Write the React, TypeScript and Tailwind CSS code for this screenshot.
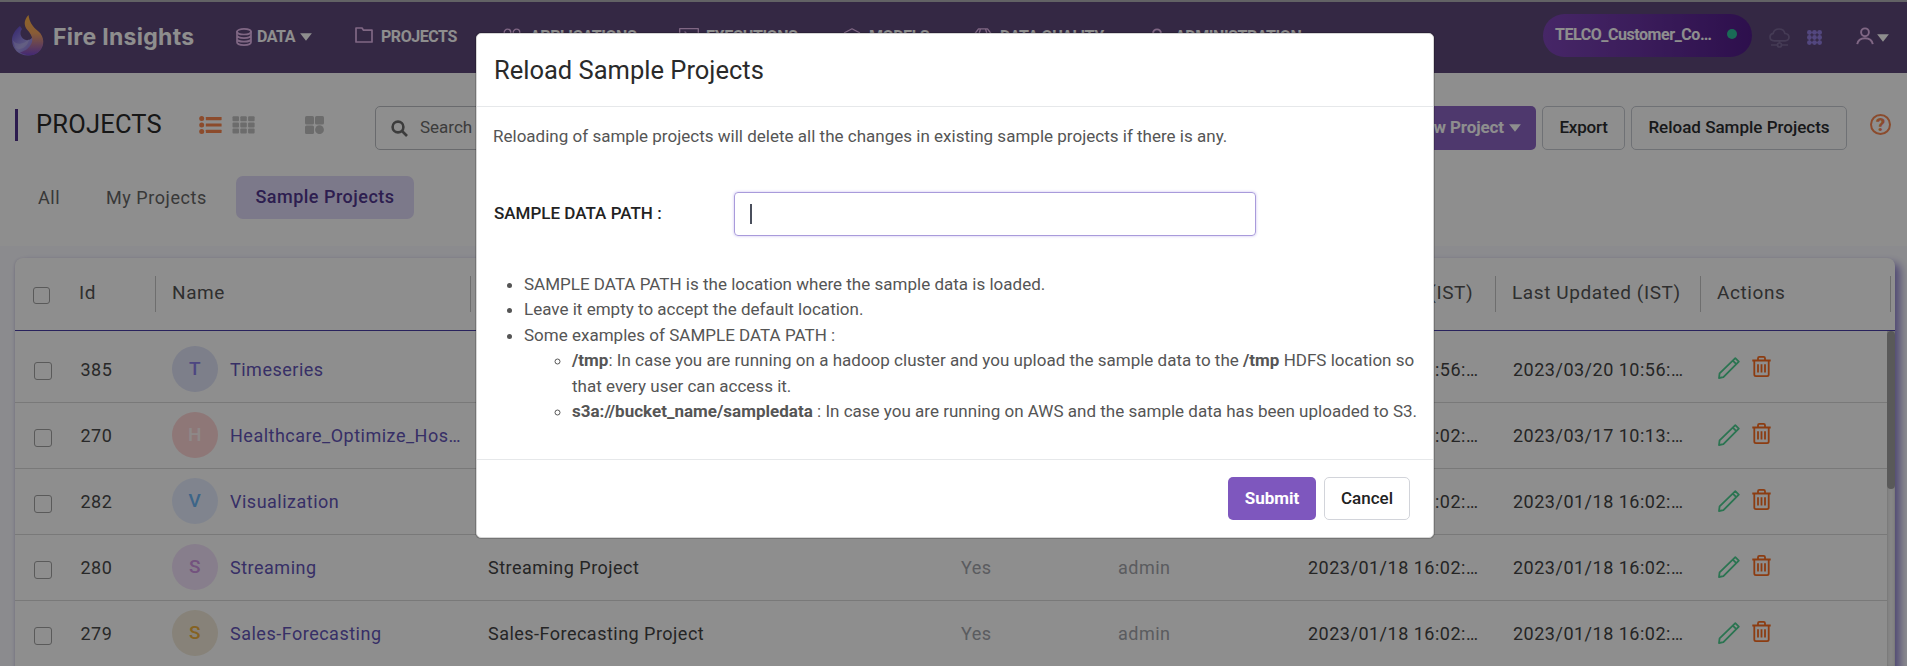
import React from "react";

type Row = {
  id: string;
  name: string;
  description: string;
  created: string;
  updated: string;
  letter: string;
  tone: string;
};

const rows: Row[] = [
  { id: "385", name: "Timeseries", description: "", created: "2023/03/20 10:56:…", updated: "2023/03/20 10:56:…", letter: "T", tone: "bg-[#e0e4f8] text-[#8a7fe8]" },
  { id: "270", name: "Healthcare_Optimize_Hos…", description: "", created: "2023/01/18 16:02:…", updated: "2023/03/17 10:13:…", letter: "H", tone: "bg-[#ffd6d6] text-[#fff5f5]" },
  { id: "282", name: "Visualization", description: "", created: "2023/01/18 16:02:…", updated: "2023/01/18 16:02:…", letter: "V", tone: "bg-[#e6eeff] text-[#6db5f5]" },
  { id: "280", name: "Streaming", description: "Streaming Project", created: "2023/01/18 16:02:…", updated: "2023/01/18 16:02:…", letter: "S", tone: "bg-[#f3e2fb] text-[#cf93e2]" },
  { id: "279", name: "Sales-Forecasting", description: "Sales-Forecasting Project", created: "2023/01/18 16:02:…", updated: "2023/01/18 16:02:…", letter: "S", tone: "bg-[#f2ead9] text-[#efb13d]" },
];

function Logo() {
  return (
    <svg width="32" height="41" viewBox="0 0 32 41" className="shrink-0">
      <defs>
        <linearGradient id="flame" x1="0" y1="0" x2="0" y2="1">
          <stop offset="0" stopColor="#ffb545" />
          <stop offset="0.45" stopColor="#f5a562" />
          <stop offset="1" stopColor="#7a4ad0" />
        </linearGradient>
        <linearGradient id="drop" x1="0" y1="0" x2="1" y2="1">
          <stop offset="0" stopColor="#5a3fc8" />
          <stop offset="0.5" stopColor="#a59be8" />
          <stop offset="1" stopColor="#6a45d8" />
        </linearGradient>
      </defs>
      <path d="M8 11 C3 15 0 20 0 25 C0 34 7 40.500 16 40.500 C24 40.500 29 36 31 29 L21 20 C20 25 16 26 12.500 24.500 C8 22 7.500 17 10 14 Z" fill="url(#drop)" />
      <path d="M16.500 0 C12 5 11.500 10 15 14.500 C20 20 22.500 25 18 31 C15 35 12 36 8 37.500 C15 42 24 41 28.500 35 C33 29 32 21 26 16 C20 11 17.500 7 16.500 0 Z" fill="url(#flame)" />
      <path d="M0.500 25 C4 30 12 30 17 24 C16 32 9 36 3.500 33 Z" fill="#cfc8f2" opacity="0.35" />
    </svg>
  );
}

const stroke = { fill: "none", stroke: "#e6b9ee", strokeWidth: 1.7, strokeLinejoin: "round" as const, strokeLinecap: "round" as const };

function DatabaseIcon() {
  return (
    <svg width="16" height="18" viewBox="0 0 16 18" {...stroke}>
      <ellipse cx="8" cy="3.700" rx="7" ry="2.800" />
      <path d="M1 3.700v10.600c0 1.550 3.100 2.800 7 2.800s7-1.250 7-2.800V3.700M1 7.300c0 1.550 3.100 2.800 7 2.800s7-1.250 7-2.800M1 10.900c0 1.550 3.100 2.800 7 2.800s7-1.250 7-2.800" />
    </svg>
  );
}
function FolderIcon() {
  return (
    <svg width="18" height="16" viewBox="0 0 18 16" {...stroke}>
      <path d="M1 15V1h6l1.500 2.200H17V15z" />
    </svg>
  );
}
function AppsIcon() {
  return (
    <svg width="18" height="18" viewBox="0 0 18 18" {...stroke} strokeWidth={1.3}>
      <circle cx="4.500" cy="4.500" r="3.300" />
      <circle cx="13.500" cy="4.500" r="3.300" />
      <circle cx="4.500" cy="13.500" r="3.300" />
      <circle cx="13.500" cy="13.500" r="3.300" />
    </svg>
  );
}
function TerminalIcon() {
  return (
    <svg width="20" height="18" viewBox="0 0 20 18" {...stroke} strokeWidth={1.3}>
      <path d="M.7.700h18.600v16.600H.7zM6 4l4 4-4 4" />
    </svg>
  );
}
function CubeIcon() {
  return (
    <svg width="18" height="18" viewBox="0 0 18 18" {...stroke} strokeWidth={1.3}>
      <path d="M9 .800l7.500 4v8.400L9 17.200l-7.500-4V4.800zM1.500 4.800L9 9l7.500-4.200M9 9v8" />
    </svg>
  );
}
function GemIcon() {
  return (
    <svg width="18" height="18" viewBox="0 0 18 18" {...stroke} strokeWidth={1.3}>
      <path d="M4.500.800h9L17.300 6 9 17 .700 6zM6.500.800L5 6l4 11 4-11-1.500-5.200M.7 6h16.600" />
    </svg>
  );
}
function UserIcon() {
  return (
    <svg width="18" height="18" viewBox="0 0 18 18" {...stroke} strokeWidth={1.9} strokeLinecap="butt">
      <circle cx="9" cy="5.300" r="3.900" />
      <path d="M1.200 17.200c.7-4 3.600-6 7.800-6s7.100 2 7.800 6" />
    </svg>
  );
}
function Caret({ className = "" }: { className?: string }) {
  return (
    <svg width="12" height="8" viewBox="0 0 12 8" className={className}>
      <path d="M.100.300h11.800L6 7.800z" fill="#fff" />
    </svg>
  );
}
function ListIcon() {
  return (
    <svg width="23" height="18" viewBox="0 0 23 18" fill="#fb8850">
      {[2.6, 9, 15.4].map((y) => (
        <g key={y}>
          <circle cx="2.700" cy={y} r="2.500" />
          <rect x="6.800" y={y - 1.6} width="15.800" height="3.200" rx=".4" />
        </g>
      ))}
    </svg>
  );
}
function GridIcon() {
  return (
    <svg width="23" height="18" viewBox="0 0 23 18" fill="#c2c2c2">
      {[0, 6.2, 12.4].map((y) => [0.5, 8.3, 16.1].map((x) => <rect key={x + "-" + y} x={x} y={y + 0.2} width="6.500" height="5" rx="1" />))}
    </svg>
  );
}
function WidgetsIcon() {
  return (
    <svg width="19" height="18" viewBox="0 0 19 18" fill="#c2c2c2">
      <rect width="9" height="8.500" rx="1.500" />
      <rect x="10" width="9" height="8.500" rx="1.500" />
      <rect y="9.500" width="9" height="8.500" rx="1.500" />
      <circle cx="14.500" cy="13.700" r="4.400" />
    </svg>
  );
}
function CloudIcon() {
  return (
    <svg width="21" height="20" viewBox="0 0 21 20" fill="none" stroke="#7c6b99" strokeWidth="1.700">
      <path d="M5.500 12.800C2.800 12.800 1 11.300 1 9c0-2 1.400-3.300 3.200-3.600C4.800 2.600 7.200 1 10 1c3 0 5.400 1.800 5.900 4.500C18.300 5.700 20 7.200 20 9.300c0 2.200-1.700 3.500-4 3.500zM10.500 12.800v2.200M2 17h6M13 17h6" />
      <circle cx="10.500" cy="17" r="2" />
    </svg>
  );
}
function DotsIcon() {
  return (
    <svg width="15" height="15" viewBox="0 0 15 15" fill="#9580e4">
      {[2.4, 7.5, 12.6].map((y) => [2.4, 7.5, 12.6].map((x) => <circle key={x + "-" + y} cx={x} cy={y} r="2.400" />))}
      <path d="M2.400 2.400h10.200v10.200H2.400z" fill="none" stroke="#9580e4" strokeWidth=".8" />
    </svg>
  );
}
function PencilIcon() {
  return (
    <svg width="22" height="22" viewBox="0 0 22 22" fill="none" stroke="#4dd192" strokeWidth="1.800" strokeLinejoin="round">
      <path d="M1 21l.6-4.600L17.300 1.200l3.500 3.400L5.400 20.200zM14.800 3.700l3.500 3.500" />
    </svg>
  );
}
function TrashIcon() {
  return (
    <svg width="19" height="21" viewBox="0 0 19 21" fill="none" stroke="#fb6d20" strokeWidth="1.800">
      <path d="M.3 4.500h18.400M2.300 4.500v14c0 1 .6 1.600 1.600 1.600h11.200c1 0 1.600-.6 1.600-1.600v-14M6 4.500V2.300c0-.9.500-1.400 1.400-1.400h4.200c.9 0 1.400.5 1.400 1.400v2.200M6 8.200v8.400M9.500 8.200v8.400M13 8.200v8.400" />
    </svg>
  );
}
function Checkbox({ className }: { className: string }) {
  return <span className={"block shrink-0 rounded-[3px] border border-[#a2a2a2] " + className} />;
}

function NavItem({ icon, label, gap, width, caret }: { icon: React.ReactNode; label: string; gap: string; width: string; caret?: boolean }) {
  return (
    <div className={"flex shrink-0 items-center " + width}>
      <span className={"flex shrink-0 " + gap}>{icon}</span>
      <span className="whitespace-nowrap text-[16px] font-bold tracking-[-0.450px] text-white">{label}</span>
      {caret && <Caret className="ml-[5px]" />}
    </div>
  );
}

function TopBar() {
  return (
    <header className="flex h-[73px] items-center border-t-2 border-[#b0b0b6] bg-[#5e487b] pl-[12px]">
      <div className="flex w-[224px] shrink-0 items-center gap-[9px] pb-[4px]">
        <Logo />
        <span className="whitespace-nowrap pt-[3px] font-['Inter'] text-[23px] font-bold tracking-[0.300px] text-white">Fire Insights</span>
      </div>
      <nav className="flex pb-px">
        <NavItem icon={<DatabaseIcon />} label="DATA" gap="w-[21px]" width="w-[119px]" caret />
        <NavItem icon={<FolderIcon />} label="PROJECTS" gap="w-[26px] pb-[4px]" width="w-[148px]" />
        <NavItem icon={<AppsIcon />} label="APPLICATIONS" gap="w-[27px]" width="w-[176px]" />
        <NavItem icon={<TerminalIcon />} label="EXECUTIONS" gap="w-[27px]" width="w-[164px]" />
        <NavItem icon={<CubeIcon />} label="MODELS" gap="w-[26px]" width="w-[131px]" />
        <NavItem icon={<GemIcon />} label="DATA QUALITY" gap="w-[26px]" width="w-[174px]" />
        <NavItem icon={<UserIcon />} label="ADMINISTRATION" gap="w-[27px]" width="w-[170px]" />
      </nav>
      <div className="ml-auto flex items-center pr-[18px]">
        <div className="mb-[4px] flex h-[43px] w-[209px] items-center rounded-full bg-linear-to-r from-[#7f46b9] to-[#521c8a] pl-[12px]">
          <span className="w-[172px] whitespace-nowrap pb-px text-[16px] font-bold tracking-[-0.450px] text-white">TELCO_Customer_Co…</span>
          <span className="mb-[4px] size-[10px] rounded-full bg-[#2fc09a]" />
        </div>
        <span className="ml-[17px]"><CloudIcon /></span>
        <span className="ml-[17px]"><DotsIcon /></span>
        <span className="ml-[34px] mb-[3px]"><UserIcon /></span>
        <Caret className="ml-[3px]" />
      </div>
    </header>
  );
}

const button = "flex h-[44px] shrink-0 items-center justify-center whitespace-nowrap rounded-[5px] border border-[#c8cbd2] text-[17px] font-medium text-[#2b2d30]";

function Toolbar() {
  return (
    <section className="h-[173px] bg-white">
      <div className="flex h-[77px] items-end pl-[15px]">
        <div className="mb-[9px] h-[32px] w-[3px] bg-[#50328c]" />
        <h1 className="mb-[7px] ml-[18px] w-[163px] text-[25.500px] leading-[38px] tracking-[0.200px] text-[#2a2a2a]">PROJECTS</h1>
        <div className="mb-[16px] flex w-[176px] items-end">
          <ListIcon />
          <span className="ml-[10px]"><GridIcon /></span>
          <span className="ml-[50px]"><WidgetsIcon /></span>
        </div>
        <div className="flex h-[44px] w-[300px] items-center rounded-[5px] border border-[#bdbfc4] pl-[15px]">
          <svg width="17" height="17" viewBox="0 0 17 17" fill="none" stroke="#6c6c6c" strokeWidth="2.600">
            <circle cx="7" cy="7" r="5.400" />
            <path d="M11 11l5 5" />
          </svg>
          <span className="ml-[12px] pb-px text-[17px] text-[#6c6c6c]">Search</span>
        </div>
        <div className="ml-auto flex items-end pr-[15px]">
          <div className="flex h-[44px] w-[144px] items-center justify-end rounded-[5px] bg-[#8c66c4] pr-[15px] text-[17px] font-bold tracking-[-0.100px] text-white">
            New Project
            <Caret className="ml-[5px]" />
          </div>
          <div className={button + " ml-[6px] w-[83px] tracking-[-0.200px]"}>Export</div>
          <div className={button + " ml-[6px] w-[216px]"}>Reload Sample Projects</div>
          <div className="mb-[15px] ml-[23px] mr-px flex size-[21px] items-center justify-center rounded-full border-2 border-[#f98851] text-[18px] font-black leading-none text-[#f98851]">?</div>
        </div>
      </div>
      <div className="mt-[26px] flex h-[43px] items-center text-[18px] tracking-[0.550px] text-[#666]">
        <span className="w-[68px] pl-[38px]">All</span>
        <span className="ml-[38px] w-[130px]">My Projects</span>
        <span className="flex h-[43px] w-[178px] items-center justify-center rounded-[7px] bg-[#dfd9f8] pb-[2px] font-medium tracking-[0.500px] text-[#51378f]">Sample Projects</span>
      </div>
    </section>
  );
}

function HeaderCell({ label, width }: { label?: string; width: string }) {
  return (
    <div className={"flex h-[36px] shrink-0 items-center whitespace-nowrap border-r border-[#c6c6c6] pl-[16px] pb-px text-[19px] tracking-[0.600px] text-[#555] " + width}>
      {label}
    </div>
  );
}

function ProjectTable() {
  return (
    <section className="h-[420px] bg-[#fafaff] pl-[15px] pr-[12px] pt-[12px]">
      <div className="h-[420px] rounded-t-[8px] bg-white shadow-[5px_5px_9px_#8f83d0,-1px_0_2px_#e6e4f0]">
        <div className="flex h-[73px] items-center border-b border-[#4b3fa8]">
          <Checkbox className="ml-[18px] mt-[3px] size-[17px]" />
          <div className="flex h-[36px] w-[106px] items-center border-r border-[#c6c6c6] pb-px pl-[29px] text-[19px] tracking-[0.500px] text-[#555]">Id</div>
          <HeaderCell label="Name" width="w-[315px]" />
          <HeaderCell width="w-[440px]" />
          <HeaderCell width="w-[190px]" />
          <HeaderCell width="w-[190px]" />
          <HeaderCell label="Date Created (IST)" width="w-[205px]" />
          <HeaderCell label="Last Updated (IST)" width="w-[205px]" />
          <HeaderCell label="Actions" width="w-[190px]" />
        </div>
        <div className="flex">
          <div className="w-[1872px] pt-[6px]">
            {rows.map((r, i) => {
              const lift = i === 0 ? "pb-[2px]" : "";
              return (
                <div key={r.id} className="flex h-[66px] items-center whitespace-nowrap border-b border-[#dadada] text-[18px] tracking-[0.500px]">
                  <span className={"ml-[19px] mt-[5px] shrink-0 " + lift}><Checkbox className="size-[18px]" /></span>
                  <span className="w-[120px] pl-[28.500px] text-[#4a4a4a]">{r.id}</span>
                  <span className={"mb-px flex size-[46px] shrink-0 items-center justify-center rounded-full text-[19px] font-medium " + r.tone}>{r.letter}</span>
                  <span className="w-[270px] shrink-0 pl-[12px] text-[#6455b8]">{r.name}</span>
                  <span className="w-[473px] shrink-0 tracking-[0.480px] text-[#444]">{r.description}</span>
                  <span className="w-[157px] shrink-0 text-[#a3a5ab]">Yes</span>
                  <span className="w-[190px] shrink-0 text-[#a3a5ab]">admin</span>
                  <span className="w-[205px] shrink-0 text-[#444]">{r.created}</span>
                  <span className="w-[205px] shrink-0 text-[#444]">{r.updated}</span>
                  <span className={"mb-[2px] shrink-0 " + lift}><PencilIcon /></span>
                  <span className={"mb-[5px] ml-[12px] shrink-0 " + lift}><TrashIcon /></span>
                </div>
              );
            })}
          </div>
          <div className="w-[8px] bg-[#f0f0f0] shadow-[inset_0_0_3px_#bbb]">
            <div className="h-[158px] rounded-full bg-[#a0a0a0]" />
          </div>
        </div>
      </div>
    </section>
  );
}

function ReloadDialog() {
  return (
    <div className="mt-[33px] h-[505px] w-[958px] overflow-hidden rounded-[5px] border border-[#d6d6d6] bg-white shadow-[0_0_0_1px_rgba(0,0,0,0.18)]">
      <div className="h-[73px] border-b border-[#e6e8ea] pl-[17px] pt-[16px] text-[25.500px] leading-[40px] text-[#2a2a2a]">Reload Sample Projects</div>
      <div className="h-[353px] border-b border-[#e6e8ea] pl-[16px] pt-[16px] text-[17px] leading-[25.500px] tracking-[0.010px] text-[#555]">
        <p className="pt-[1px]">Reloading of sample projects will delete all the changes in existing sample projects if there is any.</p>
        <div className="mt-[42px] flex items-center">
          <label className="w-[241px] pl-px font-medium text-[#222]">SAMPLE DATA PATH :</label>
          <div className="flex h-[44px] w-[522px] items-center rounded-[4px] border border-[#a99bdb] pl-[15px] shadow-[0_0_3px_#c9bff0]">
            <span className="h-[20px] w-[2px] bg-[#4a4f5c]" />
          </div>
        </div>
        <ul className="mt-[36px] list-disc pl-[31px]">
          <li>SAMPLE DATA PATH is the location where the sample data is loaded.</li>
          <li>Leave it empty to accept the default location.</li>
          <li>
            Some examples of SAMPLE DATA PATH :
            <ul className="list-[circle] whitespace-nowrap pl-[48px]">
              <li>
                <b>/tmp</b>: In case you are running on a hadoop cluster and you upload the sample data to the <b>/tmp</b> HDFS location so
                <br />
                that every user can access it.
              </li>
              <li>
                <b>s3a://bucket_name/sampledata</b> : In case you are running on AWS and the sample data has been uploaded to S3.
              </li>
            </ul>
          </li>
        </ul>
      </div>
      <div className="flex justify-end gap-[8px] pr-[23px] pt-[17px]">
        <button className="h-[43px] w-[88px] rounded-[5px] bg-[#7e57be] text-[17px] font-bold text-white">Submit</button>
        <button className="h-[43px] w-[86px] rounded-[5px] border border-[#d2d4da] bg-white text-[17px] font-medium text-[#222]">Cancel</button>
      </div>
    </div>
  );
}

export default function App() {
  return (
    <div className="relative h-[666px] w-[1907px] overflow-hidden font-['Roboto',sans-serif]">
      <TopBar />
      <Toolbar />
      <ProjectTable />
      <div className="absolute inset-0 flex items-start justify-center bg-black/[0.445] pl-[3px]">
        <ReloadDialog />
      </div>
    </div>
  );
}
